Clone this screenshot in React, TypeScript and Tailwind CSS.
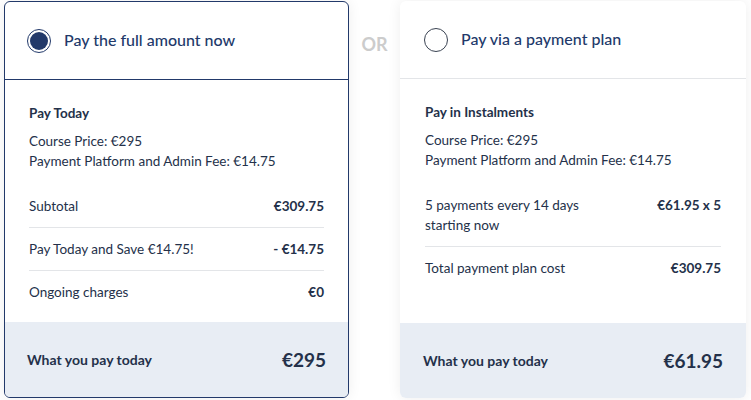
import React from "react";

const font = { fontFamily: "Lato, 'Open Sans', sans-serif" };

function Row({ label, value, last }: { label: React.ReactNode; value: string; last?: boolean }) {
  return (
    <div className={`flex justify-between items-start py-[11px] ${last ? "" : "border-b border-[#e3e5e8]"}`}>
      <div className="max-w-[185px]">{label}</div>
      <div className="font-bold whitespace-nowrap">{value}</div>
    </div>
  );
}

function Card({
  selected,
  title,
  heading,
  rows,
  total,
}: {
  selected: boolean;
  title: string;
  heading: string;
  rows: { label: string; value: string }[];
  total: string;
}) {
  return (
    <div
      className={`h-[397px] flex flex-col rounded-[6px] overflow-hidden bg-white text-[13.5px] leading-[20px] text-[#24314a] shadow-[0_0_14px_rgba(0,0,0,0.07)] ${
        selected ? "w-[345px] border border-[#22396a]" : "w-[346px]"
      }`}
    >
      <div
        className={`h-[78px] shrink-0 flex items-center gap-[13px] ${selected ? "pl-[22px] border-b border-[#22396a]" : "pl-[24px] border-b border-[#e3e5e8]"}`}
      >
        {selected ? (
          <div className="w-[24px] h-[24px] rounded-full border-[1.5px] border-[#22396a] flex items-center justify-center">
            <div className="w-[18px] h-[18px] rounded-full bg-[#22396a]" />
          </div>
        ) : (
          <div className="w-[24px] h-[24px] rounded-full border-[1.5px] border-[#3a4352]" />
        )}
        <div className="text-[16px] font-medium text-[#22396a] -mt-[2px]">{title}</div>
      </div>
      <div className={`flex-1 pt-[23px] ${selected ? "px-[24px]" : "px-[25px]"}`}>
        <div className="font-bold">{heading}</div>
        <div className="mt-[8px]">Course Price: €295</div>
        <div>Payment Platform and Admin Fee: €14.75</div>
        <div className="mt-[14px]">
          {rows.map((r, i) => (
            <Row key={i} label={r.label} value={r.value} last={i === rows.length - 1} />
          ))}
        </div>
      </div>
      <div className={`h-[75px] shrink-0 bg-[#e8edf4] flex items-center justify-between ${selected ? "px-[22px]" : "px-[23px]"}`}>
        <div className="font-bold text-[14px]">What you pay today</div>
        <div className="font-bold text-[19px]">{total}</div>
      </div>
    </div>
  );
}

export default function App() {
  return (
    <div style={font} className="w-[751px] h-[400px] bg-white flex items-start pl-[4px] pt-[1px]">
      <Card
        selected
        title="Pay the full amount now"
        heading="Pay Today"
        rows={[
          { label: "Subtotal", value: "€309.75" },
          { label: "Pay Today and Save €14.75!", value: "- €14.75" },
          { label: "Ongoing charges", value: "€0" },
        ]}
        total="€295"
      />
      <div className="w-[51px] h-[86px] flex items-center justify-center font-bold text-[18px] text-[#cccccc]">OR</div>
      <Card
        selected={false}
        title="Pay via a payment plan"
        heading="Pay in Instalments"
        rows={[
          { label: "5 payments every 14 days starting now", value: "€61.95 x 5" },
          { label: "Total payment plan cost", value: "€309.75" },
        ]}
        total="€61.95"
      />
    </div>
  );
}
